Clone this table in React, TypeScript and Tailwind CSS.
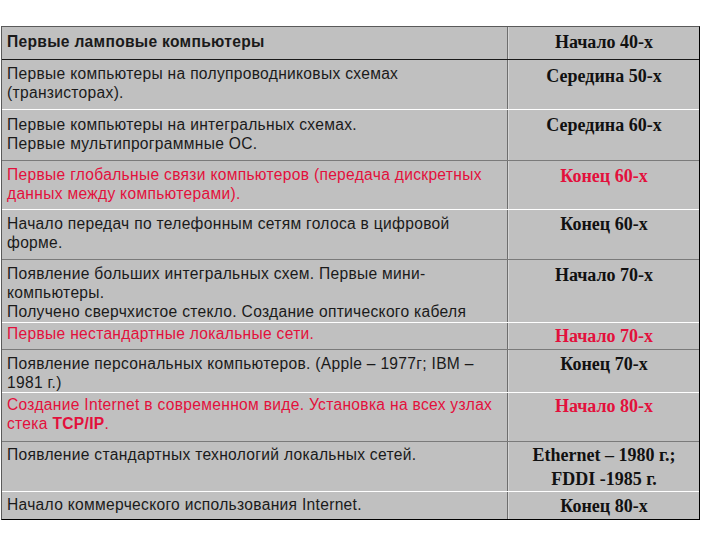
import React from 'react'

type Part = { text: string; bold?: boolean }
type Line = Part[] | string

type Row = {
  h: number
  padL: number
  padR: number
  lines: Line[]
  red?: boolean
  boldLeft?: boolean
  right: string[]
  redRight?: boolean
  sep: 'dark' | 'white' | 'black' | 'none'
}

// heights include the bottom separator line
const rows: Row[] = [
  { h: 33, padL: 5, padR: 3, lines: ['Первые ламповые компьютеры'], boldLeft: true, right: ['Начало 40-х'], sep: 'black' },
  { h: 50, padL: 4, padR: 4, lines: ['Первые компьютеры на полупроводниковых схемах', '(транзисторах).'], right: ['Середина 50-х'], sep: 'white' },
  { h: 51, padL: 5, padR: 3, lines: ['Первые компьютеры на интегральных схемах.', 'Первые мультипрограммные ОС.'], right: ['Середина 60-х'], sep: 'dark' },
  { h: 49, padL: 4, padR: 3, lines: ['Первые глобальные связи компьютеров (передача дискретных', 'данных между компьютерами).'], red: true, right: ['Конец 60-х'], redRight: true, sep: 'white' },
  { h: 50, padL: 4, padR: 2, lines: ['Начало передач по телефонным сетям голоса в цифровой', 'форме.'], right: ['Конец 60-х'], sep: 'dark' },
  { h: 63, padL: 4, padR: 3, lines: ['Появление больших интегральных схем. Первые мини-', 'компьютеры.', 'Получено сверчхистое стекло. Создание оптического кабеля'], right: ['Начало 70-х'], sep: 'white' },
  { h: 27, padL: 1, padR: 1, lines: ['Первые нестандартные локальные сети.'], red: true, right: ['Начало 70-х'], redRight: true, sep: 'dark' },
  { h: 43, padL: 4, padR: 2, lines: ['Появление персональных компьютеров. (Apple – 1977г; IBM –', '1981 г.)'], right: ['Конец 70-х'], sep: 'white' },
  { h: 49, padL: 2, padR: 1, lines: ['Создание Internet в современном виде. Установка на всех узлах', [{ text: 'стека ' }, { text: 'TCP/IP', bold: true }, { text: '.' }]], red: true, right: ['Начало 80-х'], redRight: true, sep: 'dark' },
  { h: 50, padL: 3, padR: 1, lines: ['Появление стандартных технологий локальных сетей.'], right: ['Ethernet – 1980 г.;', 'FDDI -1985 г.'], sep: 'white' },
  { h: 27, padL: 3, padR: 2, lines: ['Начало коммерческого использования Internet.'], right: ['Конец 80-х'], sep: 'none' },
]

const sepClass: Record<Row['sep'], string> = {
  dark: 'border-b border-[#7a7a7a]',
  white: 'border-b border-white',
  black: 'border-b border-[#1a1a1a]',
  none: '',
}

function LeftLine({ line }: { line: Line }) {
  if (typeof line === 'string') return <div>{line}</div>
  return (
    <div>
      {line.map((p, i) => (
        <span key={i} className={p.bold ? 'font-bold' : ''}>
          {p.text}
        </span>
      ))}
    </div>
  )
}

export default function App() {
  return (
    <div className="h-[540px] w-[720px] bg-white pt-[26px] pl-[1px]">
      <div className="w-[699px] border border-t-[#5a5a5a] border-l-[#5a5a5a] border-r-black border-b-black bg-[#c0c0c0]">
        {rows.map((r, i) => (
          <div key={i} className={`flex ${sepClass[r.sep]}`} style={{ height: r.h }}>
            <div
              className={`w-[506px] shrink-0 border-r border-[#6e6e6e] pl-[5px] text-[15.6px] leading-[19px] tracking-[0.3px] whitespace-nowrap ${r.red ? 'text-[#e3103c]' : 'text-[#1a1a1a]'} ${r.boldLeft ? 'font-bold' : ''}`}
              style={{ fontFamily: '"Liberation Sans", Arial, sans-serif', paddingTop: r.padL }}
            >
              {r.lines.map((l, j) => (
                <LeftLine key={j} line={l} />
              ))}
            </div>
            <div
              className={`flex-1 border-l border-[#d6d6d6] text-center text-[18px] font-bold leading-[24px] ${r.redRight ? 'text-[#e3103c]' : 'text-[#111]'}`}
              style={{ fontFamily: '"Liberation Serif", "Times New Roman", serif', paddingTop: r.padR }}
            >
              {r.right.map((t, j) => (
                <div key={j}>{t}</div>
              ))}
            </div>
          </div>
        ))}
      </div>
    </div>
  )
}
